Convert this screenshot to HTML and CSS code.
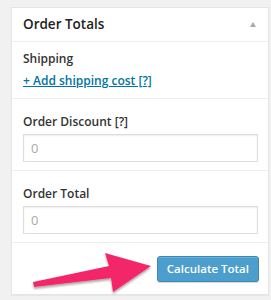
FILE: index.html
```html
<!DOCTYPE html>
<html lang="en">
<head>
    <meta charset="UTF-8">
    <title>Order Totals</title>
    <link rel="stylesheet" href="styles.css">
</head>
<body>
    <div class="postbox">
        <div class="hndle">
            <h3>Order Totals</h3>
            <span class="toggle"></span>
        </div>
        <div class="totals-group shipping">
            <h4>Shipping</h4>
            <a href="#" class="add-line">+ Add shipping cost [?]</a>
        </div>
        <div class="totals-group">
            <h4>Order Discount <span class="tip">[?]</span></h4>
            <input type="text" class="total-input" placeholder="0">
        </div>
        <div class="totals-group">
            <h4>Order Total</h4>
            <input type="text" class="total-input" placeholder="0">
        </div>
        <div class="actions">
            <button class="button-primary">Calculate Total</button>
        </div>
    </div>

    <svg class="pointer" width="130" height="50" viewBox="28 250 130 50">
        <defs>
            <filter id="shade" x="-10%" y="-20%" width="120%" height="150%">
                <feGaussianBlur in="SourceAlpha" stdDeviation="1"/>
                <feOffset dx="0" dy="1.5"/>
                <feComponentTransfer><feFuncA type="linear" slope="0.35"/></feComponentTransfer>
                <feMerge><feMergeNode/><feMergeNode in="SourceGraphic"/></feMerge>
            </filter>
        </defs>
        <polygon filter="url(#shade)" fill="#f4286a"
            points="33,282 109,266 105,253 151,266 113,292 111,278 34,287"/>
    </svg>
</body>
</html>
```

FILE: styles.css
```css
body {
    margin: 0;
    background: #f1f1f1;
    font-family: 'Open Sans', 'Liberation Sans', sans-serif;
    color: #222;
    width: 271px;
    height: 300px;
    overflow: hidden;
    position: relative;
}
.postbox {
    margin: 7px 0 0 11px;
    width: 256px;
    background: #fff;
    border: 1px solid #e5e5e5;
    box-shadow: 0 1px 1px rgba(0,0,0,0.04);
}
.hndle {
    display: flex;
    justify-content: space-between;
    align-items: center;
    height: 33px;
    padding: 0 12px 0 11px;
    border-bottom: 1px solid #eee;
}
.hndle h3 {
    margin: 0;
    font-size: 13.5px;
    line-height: 19px;
    font-weight: 600;
    color: #222;
}
.toggle {
    width: 0;
    height: 0;
    border-left: 3px solid transparent;
    border-right: 3px solid transparent;
    border-bottom: 5px solid #aaa;
    margin-top: -1px;
}
.totals-group {
    padding: 14px 11px 8px;
    border-bottom: 1px solid #eee;
}
.totals-group.shipping {
    padding: 8px 11px 9px;
}
.totals-group h4 {
    margin: 0 0 4px;
    font-size: 12px;
    line-height: 17px;
    font-weight: 600;
    color: #333;
}
.shipping h4 {
    margin-bottom: 5px;
}
.add-line {
    display: block;
    font-size: 12px;
    line-height: 17px;
    font-weight: 600;
    color: #0074a2;
}
.total-input {
    display: block;
    box-sizing: border-box;
    width: 235px;
    height: 28px;
    margin: 0;
    padding: 0 7px;
    border: 1px solid #ddd;
    box-shadow: inset 0 1px 2px rgba(0,0,0,0.07);
    font-family: inherit;
    font-size: 13px;
}
.total-input::placeholder {
    color: #aaa;
}
.actions {
    display: flex;
    justify-content: flex-end;
    padding: 13px 9px 12px;
}
.button-primary {
    height: 26px;
    padding: 0 9px;
    background: #4c9ecc;
    border: 1px solid #3e87b2;
    border-radius: 3px;
    box-shadow: inset 0 1px 0 rgba(120,200,230,0.5), 0 1px 0 rgba(0,0,0,0.15);
    color: #fff;
    font-family: inherit;
    font-size: 11.5px;
    line-height: 24px;
    font-weight: 600;
}
.pointer {
    position: absolute;
    left: 28px;
    top: 250px;
}
```
